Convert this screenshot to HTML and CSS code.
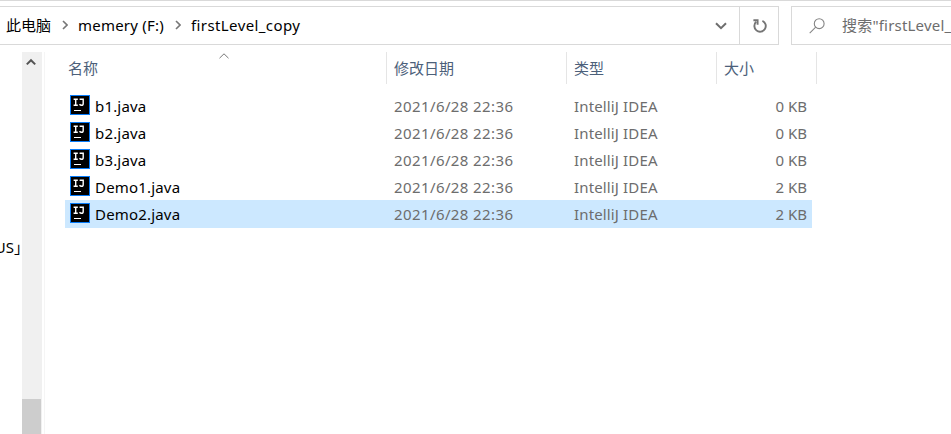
FILE: index.html
```
<!DOCTYPE html>
<html lang="zh-CN">
<head>
<meta charset="utf-8">
<title>firstLevel_copy</title>
<link rel="stylesheet" href="styles.css">
</head>
<body>
<svg width="0" height="0" class="defs">
  <symbol id="ij" viewBox="0 0 20 20">
    <rect width="20" height="20" fill="#087cfa"/>
    <rect x="1" y="1" width="18" height="18" fill="#000"/>
    <path d="M3.6 4.2h4.2M3.6 10.2h4.2M5.7 4.2v6M9.6 4.2h3.6v4.2q0 1.9-1.7 1.9-1.2 0-2-1" fill="none" stroke="#fff" stroke-width="1.4"/>
    <rect x="4" y="15" width="7" height="1" fill="#fff"/>
  </symbol>
</svg>
<header class="toolbar">
  <div class="address">
    <nav class="crumbs">
      <span class="crumb c1">此电脑</span>
      <svg class="sep" width="6" height="10" viewBox="0 0 6 10"><path d="M1 1l4 4-4 4"/></svg>
      <span class="crumb c2">memery (F:)</span>
      <svg class="sep" width="6" height="10" viewBox="0 0 6 10"><path d="M1 1l4 4-4 4"/></svg>
      <span class="crumb c3">firstLevel_copy</span>
    </nav>
    <svg class="drop" width="12" height="8" viewBox="0 0 12 8"><path d="M1 1.2l5 5 5-5"/></svg>
    <div class="refresh"><svg width="16" height="16" viewBox="0 0 16 16"><path d="M10.4 2.8A5.7 5.7 0 1 1 4.2 3.8"/><path d="M1.4 2.2h4.2v4.6"/></svg></div>
  </div>
  <div class="search">
    <svg width="16" height="16" viewBox="0 0 16 16"><circle cx="10.2" cy="5.7" r="4.9"/><path d="M6.7 9.2L.7 15.2"/></svg>
    <span>搜索"firstLevel_</span>
  </div>
</header>
<main class="main">
  <aside class="tree"><span>US」</span></aside>
  <div class="scrollbar">
    <svg width="10" height="8" viewBox="0 0 10 8"><path d="M.8 6.4L5 2.2l4.2 4.2"/></svg>
    <div class="thumb"></div>
  </div>
  <section class="files">
    <div class="head">
      <div class="h name">名称<svg class="sort" width="10" height="6" viewBox="0 0 10 6"><path d="M.5 5.2L5 .8l4.5 4.4"/></svg></div>
      <div class="h date">修改日期</div>
      <div class="h type">类型</div>
      <div class="h size">大小</div>
    </div>
    <div class="rows">
      <div class="row"><svg class="ico"><use href="#ij"/></svg><span class="fn">b1.java</span><span class="dt">2021/6/28 22:36</span><span class="tp">IntelliJ IDEA</span><span class="sz">0 KB</span></div>
      <div class="row"><svg class="ico"><use href="#ij"/></svg><span class="fn">b2.java</span><span class="dt">2021/6/28 22:36</span><span class="tp">IntelliJ IDEA</span><span class="sz">0 KB</span></div>
      <div class="row"><svg class="ico"><use href="#ij"/></svg><span class="fn">b3.java</span><span class="dt">2021/6/28 22:36</span><span class="tp">IntelliJ IDEA</span><span class="sz">0 KB</span></div>
      <div class="row"><svg class="ico"><use href="#ij"/></svg><span class="fn">Demo1.java</span><span class="dt">2021/6/28 22:36</span><span class="tp">IntelliJ IDEA</span><span class="sz">2 KB</span></div>
      <div class="row selected"><svg class="ico"><use href="#ij"/></svg><span class="fn">Demo2.java</span><span class="dt">2021/6/28 22:36</span><span class="tp">IntelliJ IDEA</span><span class="sz">2 KB</span></div>
    </div>
  </section>
</main>
</body>
</html>
```
FILE: styles.css
```
* { box-sizing: border-box; }
body {
  margin: 0;
  height: 434px;
  overflow: hidden;
  background: #fff;
  color: #000;
  font: 15px/20px "Noto Sans", "Noto Sans CJK SC", sans-serif;
  white-space: nowrap;
}
svg { flex: none; fill: none; }
.defs { position: absolute; }
.toolbar {
  display: flex;
  gap: 12px;
  height: 52px;
  padding-top: 5px;
  border-top: 1px solid #d9d9d9;
}
.address {
  display: flex;
  align-items: center;
  flex: none;
  width: 779px;
  height: 39px;
  border: 1px solid #d9d9d9;
  border-left: 0;
}
.crumbs { display: flex; align-items: center; flex: 1; padding-left: 6px; }
.crumb { flex: none; margin-top: -1px; }
.c1 { width: 56px; }
.c2 { width: 97px; margin-left: 10px; letter-spacing: .22px; }
.c3 { margin-left: 10px; letter-spacing: .4px; }
.sep { margin-top: -2px; }
.sep path { stroke: #777; stroke-width: 1.6; }
.drop { margin-right: 12px; }
.drop path { stroke: #6e6e6e; stroke-width: 2; }
.refresh {
  display: flex;
  align-items: center;
  justify-content: center;
  width: 39px;
  height: 37px;
  padding-left: 2px;
  border-left: 1px solid #d9d9d9;
}
.refresh path { stroke: #757575; stroke-width: 1.9; }
.search {
  display: flex;
  align-items: center;
  gap: 17px;
  flex: 1;
  min-width: 0;
  overflow: hidden;
  height: 39px;
  padding-left: 17px;
  border: 1px solid #d9d9d9;
  border-right: 0;
  color: #6d6d6d;
}
.search span { margin-top: -1px; letter-spacing: .2px; }
.search svg { stroke: #858585; stroke-width: 1.1; }
.main { display: flex; height: 382px; }
.tree {
  display: flex;
  justify-content: flex-end;
  width: 22px;
  padding-top: 185px;
  overflow: hidden;
}
.tree span { flex: none; margin-right: -7px; }
.scrollbar {
  display: flex;
  flex-direction: column;
  justify-content: space-between;
  width: 20px;
  padding-top: 6px;
  background: #f0f0f0;
}
.scrollbar svg { margin-left: 4px; stroke: #555; stroke-width: 2; }
.thumb { width: 19px; height: 35px; background: #cdcdcd; }
.files { flex: 1; margin-left: 2px; border-left: 1px solid #f5f5f5; }
.head { display: flex; height: 32px; color: #4c607a; }
.h { position: relative; padding: 6px 0 0 7px; border-right: 1px solid #e5e5e5; }
.name { width: 342px; padding-left: 23px; }
.date { width: 180px; }
.type { width: 150px; }
.size { width: 100px; }
.sort { position: absolute; left: 174px; top: 1px; stroke: #777; }
.rows { padding: 8px 0 0 20px; }
.row {
  display: grid;
  grid-template-columns: 25px 299px 180px 150px 83px;
  align-items: start;
  width: 747px;
  height: 27px;
  padding-left: 5px;
  line-height: 29px;
  color: #6d6d6d;
}
.row.selected { height: 28px; background: #cce8ff; }
.ico { width: 20px; height: 20px; margin-top: 3px; }
.fn { color: #000; letter-spacing: .18px; }
.dt { letter-spacing: .4px; }
.tp { letter-spacing: .14px; }
.sz { text-align: right; }
```
